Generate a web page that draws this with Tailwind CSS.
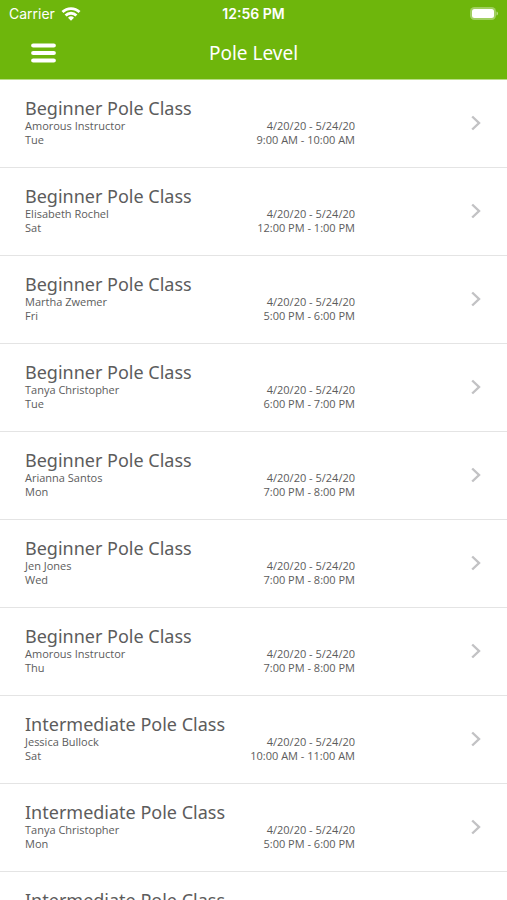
<!DOCTYPE html>
<html lang="en"><head><meta charset="utf-8"><meta name="viewport" content="width=device-width"><title>Pole Level</title>
<script src="https://cdn.jsdelivr.net/npm/@tailwindcss/browser@4"></script></head>
<body class="h-screen overflow-hidden bg-white font-['Open_Sans',sans-serif] text-[#5c5c5c]">
<header class="border-b border-[#b9dd88] bg-[#6eb60c] text-white">
<div class="grid h-7 grid-cols-3 items-center px-[9px] font-[Inter,sans-serif] text-sm">
<div class="flex items-center gap-[6px]"><span>Carrier</span>
<svg class="h-[14px] w-5 shrink-0" viewBox="0 0 20 14" fill="none" stroke="currentColor" stroke-width="2.800"><path d="M1.500 5.100a12 12 0 0 1 17 0M4.600 8.500a7.600 7.600 0 0 1 10.800 0"/><path d="M10 13.800l-3-3a4.300 4.300 0 0 1 6 0z" fill="currentColor" stroke="none"/></svg></div>
<span class="text-center font-semibold">12:56 PM</span>
<svg class="h-4 w-7 justify-self-end" viewBox="2 0 28 16" fill="none"><rect x="2" y="1" width="26" height="13" rx="4.500" fill="#fff" fill-opacity=".35"/><rect x="4" y="3" width="22" height="9" rx="2.500" fill="#fff"/><path d="M28.500 5.500c2 .7 2 3.300 0 4z" fill="#fff" fill-opacity=".5"/></svg>
</div>
<div class="grid grid-cols-[1fr_auto_1fr] items-center px-[31px] pt-[11px] pb-3">
<button class="justify-self-start" aria-label="Menu"><svg class="h-5 w-[25px]" viewBox="0 0 25 20" stroke="currentColor" stroke-width="4.200" stroke-linecap="round"><path d="M2.200 2.500h20.600M2.200 10h20.600M2.200 17.500h20.600"/></svg></button>
<h1 class="font-['Noto_Sans',sans-serif] text-[19px] leading-7">Pole Level</h1>
</div></header>
<main><ul id="classes"></ul></main>
<template id="row"><li class="border-b border-[#e4e4e4]"><a href="#" class="flex h-[87px] items-center pr-[26px] pl-[25px]">
<div class="w-[330px] pb-[2px]"><h2 class="font-['Noto_Sans',sans-serif] text-[18px] leading-[21px]"></h2>
<div class="flex justify-between text-[11px] leading-[14px]"><p></p><p class="text-right"></p></div></div>
<svg class="mb-[2px] ml-auto h-4 w-[10px]" viewBox="0 0 10 16" fill="none" stroke="#c2c2c4" stroke-width="2.400"><path d="M1.200 1.500L8 8l-6.800 6.500"/></svg></a></li></template>
<script>
const rows = [
["Beginner","Amorous Instructor","Tue","9:00 AM - 10:00 AM"],
["Beginner","Elisabeth Rochel","Sat","12:00 PM - 1:00 PM"],
["Beginner","Martha Zwemer","Fri","5:00 PM - 6:00 PM"],
["Beginner","Tanya Christopher","Tue","6:00 PM - 7:00 PM"],
["Beginner","Arianna Santos","Mon","7:00 PM - 8:00 PM"],
["Beginner","Jen Jones","Wed","7:00 PM - 8:00 PM"],
["Beginner","Amorous Instructor","Thu","7:00 PM - 8:00 PM"],
["Intermediate","Jessica Bullock","Sat","10:00 AM - 11:00 AM"],
["Intermediate","Tanya Christopher","Mon","5:00 PM - 6:00 PM"],
["Intermediate","Jessica Bullock","Wed","6:00 PM - 7:00 PM"]];
const list = document.getElementById("classes"), row = document.getElementById("row");
for (const [level, teacher, day, time] of rows) {
  const item = row.content.cloneNode(true);
  item.querySelector("h2").textContent = level + " Pole Class";
  const [left, right] = item.querySelectorAll("p");
  left.append(teacher, document.createElement("br"), day);
  right.append("4/20/20 - 5/24/20", document.createElement("br"), time);
  list.append(item);
}
</script></body></html>
